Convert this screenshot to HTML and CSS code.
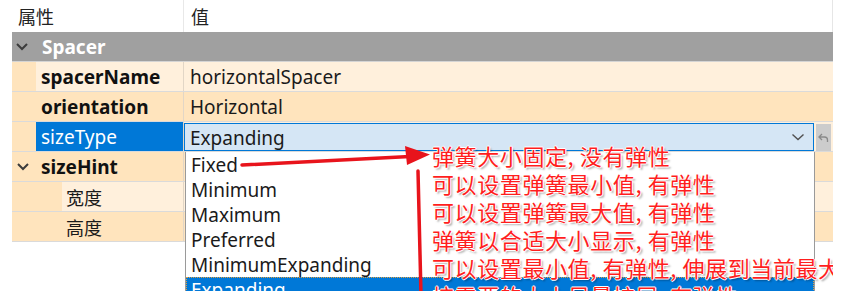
FILE: index.html
```html
<!DOCTYPE html>
<html lang="zh">
<head>
<meta charset="utf-8">
<title>Spacer 属性</title>
<link rel="stylesheet" href="styles.css">
</head>
<body>
<div class="page">
  <div class="sheet">
    <div class="hdr">
      <div class="hc1">属性</div>
      <div class="hc2">值</div>
    </div>
    <div class="group">
      <svg class="chev" width="14" height="10" viewBox="0 0 14 10"><polyline points="2,2 7,7 12,2" fill="none" stroke="#3c3c3c" stroke-width="2"/></svg>
      <span class="gname">Spacer</span>
    </div>
    <div class="row light">
      <div class="c1"><div class="ind"></div><div class="lbl b">spacerName</div></div>
      <div class="c2"><span class="val">horizontalSpacer</span></div>
    </div>
    <div class="row dark">
      <div class="c1"><div class="ind"></div><div class="lbl b">orientation</div></div>
      <div class="c2"><span class="val">Horizontal</span></div>
    </div>
    <div class="row light">
      <div class="c1"><div class="ind"></div><div class="lbl sel">sizeType</div></div>
      <div class="c2 combo-cell">
        <div class="combo">
          <span class="val">Expanding</span>
          <svg class="cchev" width="14" height="8" viewBox="0 0 14 8"><polyline points="1.5,1.5 7,6.5 12.5,1.5" fill="none" stroke="#505050" stroke-width="1.4"/></svg>
        </div>
        <div class="reset">
          <svg width="11" height="10" viewBox="0 0 11 10"><path d="M4 1 L1 4 L4 7 M1.5 4 H6.5 Q9.5 4 9.5 7 V9" fill="none" stroke="#8a8a8a" stroke-width="1.3"/></svg>
        </div>
      </div>
    </div>
    <div class="row dark">
      <div class="c1"><div class="ind"><svg class="chev2" width="14" height="10" viewBox="0 0 14 10"><polyline points="2,2 7,7 12,2" fill="none" stroke="#3c3c3c" stroke-width="2"/></svg></div><div class="lbl b">sizeHint</div></div>
      <div class="c2"></div>
    </div>
    <div class="row light">
      <div class="c1"><div class="ind wide"></div><div class="lbl cjk">宽度</div></div>
      <div class="c2"></div>
    </div>
    <div class="row dark">
      <div class="c1"><div class="ind wide"></div><div class="lbl cjk">高度</div></div>
      <div class="c2"></div>
    </div>
  </div>

  <ul class="popup">
    <li>Fixed</li>
    <li>Minimum</li>
    <li>Maximum</li>
    <li>Preferred</li>
    <li>MinimumExpanding</li>
    <li class="hl">Expanding</li>
  </ul>

  <svg class="arrows" width="853" height="291" viewBox="0 0 853 291">
    <line x1="242" y1="165" x2="410" y2="156.5" stroke="#e8141c" stroke-width="3.5" stroke-linecap="round"/>
    <polygon points="430,154.5 405,146 407,165" fill="#e8141c"/>
    <line x1="418" y1="171" x2="421" y2="295" stroke="#e8141c" stroke-width="3.5" stroke-linecap="round"/>
  </svg>

  <div class="notes">
    <div>弹簧大小固定, 没有弹性</div>
    <div>可以设置弹簧最小值, 有弹性</div>
    <div>可以设置弹簧最大值, 有弹性</div>
    <div>弹簧以合适大小显示, 有弹性</div>
    <div>可以设置最小值, 有弹性, 伸展到当前最大</div>
    <div>按需要的大小尽量扩展, 有弹性</div>
  </div>
</div>
</body>
</html>
```

FILE: styles.css
```css
html, body {
  margin: 0;
  padding: 0;
  background: #ffffff;
}
body {
  width: 853px;
  height: 291px;
  overflow: hidden;
  font-family: "Noto Sans", "Noto Sans CJK SC", sans-serif;
  font-size: 19px;
  color: #1a1a1a;
}
.page {
  position: relative;
  width: 853px;
  height: 291px;
  overflow: hidden;
}
.sheet {
  margin-left: 12px;
  width: 821px;
}
.hdr {
  display: flex;
  height: 32px;
  align-items: center;
  border-right: 1px solid #e6e6e6;
  font-family: "Noto Sans CJK SC", sans-serif;
  font-size: 18px;
  color: #222;
}
.hc1 {
  width: 172px;
  height: 32px;
  line-height: 32px;
  padding-left: 6px;
  box-sizing: border-box;
  border-right: 1px solid #e8e8e8;
}
.hc2 {
  padding-left: 7px;
}
.group {
  display: flex;
  align-items: center;
  height: 29px;
  background: #a0a0a0;
  border-bottom: 1px solid #d4d4d4;
}
.chev {
  margin-left: 3px;
  margin-right: 13px;
}
.gname {
  font-weight: bold;
  color: #ffffff;
  font-size: 19px;
  padding-top: 1px;
}
.row {
  display: flex;
  height: 29px;
  border-bottom: 1px solid #dadada;
}
.light { background: #fff0dc; }
.dark { background: #ffe4bd; }
.c1 {
  display: flex;
  width: 172px;
  border-right: 1px solid #e2d6c6;
  box-sizing: border-box;
}
.ind {
  width: 24px;
  flex: none;
  background: #ffe4bd;
  display: flex;
  align-items: center;
}
.ind.wide { width: 50px; }
.chev2 { margin-left: 4px; }
.lbl {
  flex: 1;
  padding: 1px 0 0 5px;
  line-height: 29px;
  white-space: nowrap;
}
.lbl.b { font-weight: bold; color: #111; }
.lbl.sel { background: #0078d7; color: #ffffff; }
.lbl.cjk {
  font-family: "Noto Sans CJK SC", sans-serif;
  font-size: 18px;
  padding-left: 4px;
}
.c2 {
  flex: 1;
  display: flex;
  align-items: center;
}
.val {
  padding: 1px 0 0 6px;
  white-space: nowrap;
}
.combo-cell {
  align-items: stretch;
}
.combo {
  width: 630px;
  box-sizing: border-box;
  margin-top: 1px;
  background: #d5e6f5;
  border: 1px solid #0078d7;
  display: flex;
  align-items: center;
  justify-content: space-between;
  padding-right: 8px;
}
.combo .val { padding-left: 5px; }
.reset {
  width: 15px;
  margin: 2px 0 0 2px;
  background: #cccccc;
  display: flex;
  align-items: center;
  justify-content: center;
}
.popup {
  position: absolute;
  left: 185px;
  top: 152px;
  width: 630px;
  height: 139px;
  overflow: hidden;
  margin: 0;
  padding: 0;
  list-style: none;
  background: #ffffff;
  border-left: 1px solid #9a9a9a;
  border-right: 1px solid #9a9a9a;
  box-sizing: border-box;
}
.popup li {
  height: 25px;
  line-height: 25px;
  padding: 1px 0 0 5px;
  box-sizing: border-box;
}
.popup li.hl {
  background: #0078d7;
  color: #ffffff;
  outline: 1px dotted #e0a040;
  outline-offset: -1px;
}
.arrows {
  position: absolute;
  left: 0;
  top: 0;
}
.notes {
  position: absolute;
  left: 432px;
  top: 141px;
  width: 401px;
  height: 150px;
  overflow: hidden;
  font-family: "Noto Sans CJK SC", sans-serif;
  font-size: 22px;
  letter-spacing: 0.6px;
  line-height: 28px;
  color: #ff1e1e;
  white-space: nowrap;
  text-shadow: 1px 0 0 #fff, -1px 0 0 #fff, 0 1px 0 #fff, 0 -1px 0 #fff, 2px 2px 2px rgba(0,0,0,0.35);
}
```
